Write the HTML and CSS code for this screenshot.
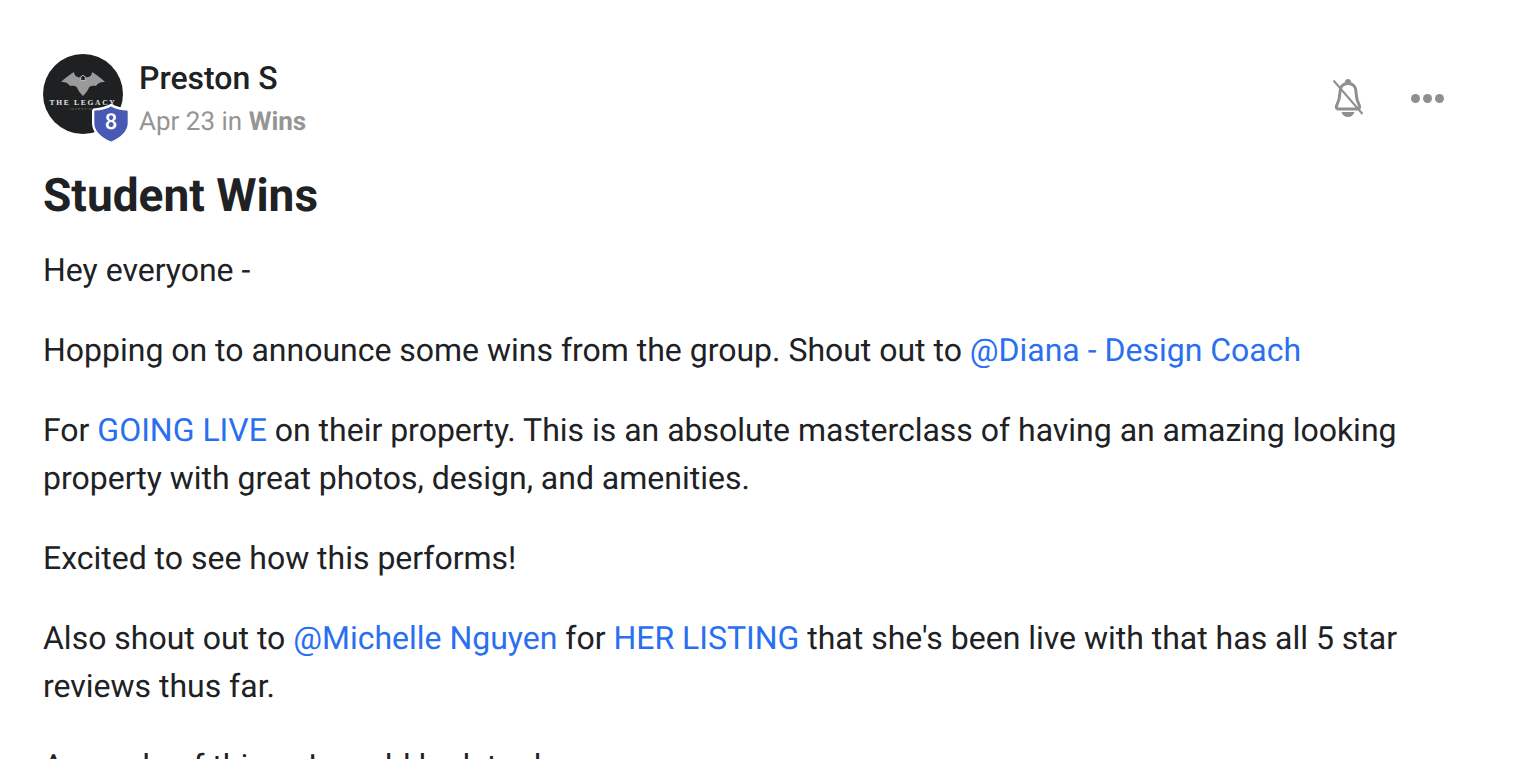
FILE: index.html
```html
<!DOCTYPE html>
<html lang="en">
<head>
<meta charset="utf-8">
<title>Student Wins</title>
<link rel="stylesheet" href="styles.css">
</head>
<body>
<main class="post">
  <header class="post-head">
    <div class="avatar-wrap">
      <div class="avatar">
        <svg class="bat" viewBox="0 0 44 24" aria-hidden="true">
          <path d="M0 10 C4 6 9 2.500 13 0 C13 3 15 5 18 5.500 L22 3 L26 5.500 C29 5 31 3 31 0 C35 2.500 40 6 44 10 C40 9.500 37 11 35 14 C32 13.500 29 14 28 15.500 C27 18.500 24.500 21.500 22 24 C19.500 21.500 17 18.500 16 15.500 C15 14 12 13.500 9 14 C7 11 4 9.500 0 10 Z" fill="#9a9a9a"/>
          <path d="M22 3 L19.800 5.200 V8.500 H24.200 V5.200 Z" fill="#1f2022" stroke="#d8d8d8" stroke-width=".7"/>
        </svg>
        <span class="logo-name">THE LEGACY</span>
        <span class="logo-sub">INVESTING</span>
      </div>
      <svg class="level" viewBox="0 0 38 40" aria-hidden="true">
        <path d="M19 2 C24 4.500 30 6 34 6 Q36 6 36 8 V19 C36 28 28 34 19 38 C10 34 2 28 2 19 V8 Q2 6 4 6 C8 6 14 4.500 19 2 Z" fill="#4759b5" stroke="#fff" stroke-width="2.200"/>
      </svg>
      <span class="level-num">8</span>
    </div>
    <div class="meta">
      <div class="author">Preston S</div>
      <div class="date">Apr 23 in <b>Wins</b></div>
    </div>
    <div class="actions">
      <svg class="bell" viewBox="0 0 32 42" aria-hidden="true">
        <path d="M12.500 5.500 C13 3 14.500 2 16 2 C17.500 2 19 3 19.500 5.500 Z" fill="#8f8f8f"/>
        <path d="M16 6.500 C10.500 6.500 8 10.500 8 15 C8 22 6.500 25 4.500 29 C4 31 5 32 7 32 H25 C27 32 28 31 27.500 29 C25.500 25 24 22 24 15 C24 10.500 21.500 6.500 16 6.500 Z" fill="none" stroke="#8f8f8f" stroke-width="3"/>
        <path d="M9.500 35 H22.500 C21.500 38.500 19 40 16 40 C13 40 10.500 38.500 9.500 35 Z" fill="#8f8f8f"/>
        <path d="M1.500 3.500 L30.500 37" fill="none" stroke="#8f8f8f" stroke-width="2"/>
      </svg>
      <div class="dots"><i></i><i></i><i></i></div>
    </div>
  </header>
  <h1 class="title">Student Wins</h1>
  <div class="body">
    <p>Hey everyone -</p>
    <p>Hopping on to announce some wins from the group. Shout out to <a href="#">@Diana - Design Coach</a></p>
    <p>For <a href="#">GOING LIVE</a> on their property. This is an absolute masterclass of having an amazing looking property with great photos, design, and amenities.</p>
    <p>Excited to see how this performs!</p>
    <p>Also shout out to <a href="#">@Michelle Nguyen</a> for <a href="#">HER LISTING</a> that she's been live with that has all 5 star reviews thus far.</p>
    <p>A couple of things I would look to do:</p>
  </div>
</main>
</body>
</html>
```

FILE: styles.css
```css
html, body { margin: 0; height: 100%; overflow: hidden; background: #fff; }
body { font-family: Roboto, "Liberation Sans", sans-serif; color: #202124; text-rendering: geometricPrecision; }
.post { padding: 54px 74px 0 43px; }
.post-head { display: flex; align-items: flex-start; height: 80px; }
.avatar-wrap { position: relative; width: 80px; height: 80px; flex: none; }
.avatar {
  width: 80px; height: 80px; border-radius: 50%; background: #1f2022;
  display: flex; flex-direction: column; align-items: center; overflow: hidden;
}
.bat { width: 44px; height: 24px; margin-top: 18px; flex: none; }
.logo-name {
  font-family: "Liberation Serif", serif; font-weight: 700; font-size: 7.500px; line-height: 8px;
  letter-spacing: 1.700px; color: #e4e4e4; margin-top: 3px; white-space: nowrap;
}
.logo-sub {
  font-family: "Liberation Sans", sans-serif; font-size: 3px; line-height: 4px;
  letter-spacing: 1.200px; color: #8a8a8a; white-space: nowrap;
}
.level { position: absolute; left: 48px; top: 49px; width: 40px; height: 42px; }
.level-num {
  position: absolute; left: 48px; top: 47px; width: 40px; height: 42px;
  display: flex; align-items: center; justify-content: center;
  color: #fff; font-size: 22px; font-weight: 500;
}
.meta { margin-left: 16px; flex: 1; }
.author { font-size: 32px; line-height: 48px; font-weight: 500; }
.date { font-size: 26px; line-height: 38px; color: #959595; margin-top: 1px; }
.date b { font-weight: 700; }
.actions { display: flex; align-items: center; gap: 47px; margin-top: 23px; }
.bell { width: 32px; height: 42px; flex: none; }
.dots { display: flex; gap: 3px; }
.dots i { display: block; width: 9px; height: 9px; border-radius: 50%; background: #8f8f8f; }
.title { margin: 34px 0 0; font-size: 46px; line-height: 56px; font-weight: 700; }
.body { margin-top: 22px; font-size: 32px; line-height: 48px; letter-spacing: -0.01px; width: 1370px; }
.body p { margin: 0 0 32px; }
.body a { color: #2a6ff0; text-decoration: none; }
```
